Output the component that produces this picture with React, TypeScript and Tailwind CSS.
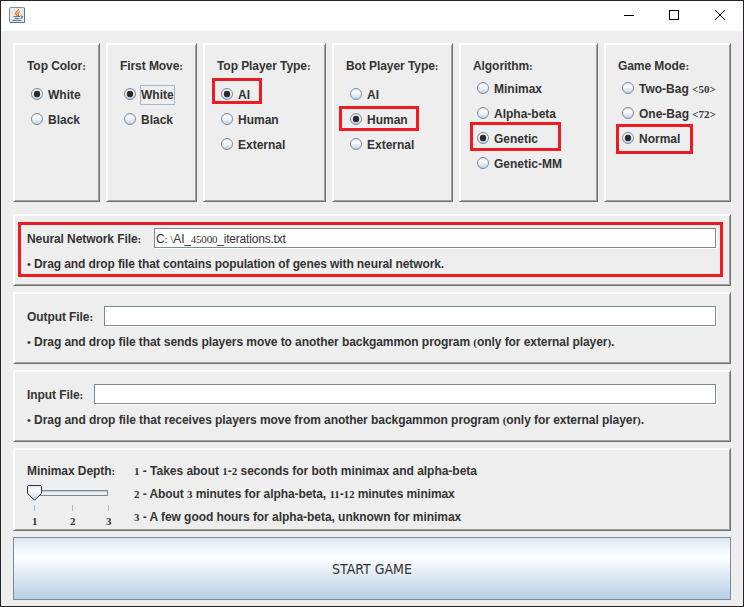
import type { ReactNode } from "react";

const sans = 'font-["Liberation_Sans",Arial,sans-serif]';

// Digits and a few symbols fall back to a serif face inside the sans labels.
function Text({ children, className = "" }: { children: string; className?: string }) {
  return (
    <span className={`inline-block h-[18px] whitespace-pre text-[12px] leading-[18px] ${className}`}>
      {children.split(/([0-9:()<>•\\]+)/).map((part, i) =>
        i % 2 ? (
          <span key={i} className='font-["Liberation_Serif",serif] text-[11px] leading-none'>
            {part}
          </span>
        ) : (
          part
        ),
      )}
    </span>
  );
}

function Panel({ className = "", children }: { className?: string; children: ReactNode }) {
  return (
    <section
      className={`border border-t-white border-r-[#6f6f6f] border-b-[#6f6f6f] border-l-white px-[13px] shadow-[inset_1px_1px_#fff,inset_-1px_-1px_#a2a2a2] ${className}`}
    >
      {children}
    </section>
  );
}

function Radio({ on }: { on: boolean }) {
  return (
    <svg width="12" height="12" viewBox="0 0 12 12" className="mt-[6px] shrink-0">
      <circle cx="6" cy="6" r="5.5" fill="url(#metal)" stroke="#7a8a99" />
      {on && <circle cx="6" cy="6" r="3.2" fill="#2b2b2b" />}
    </svg>
  );
}

function Mark({ className }: { className: string }) {
  return <div className={`pointer-events-none absolute border-[3px] border-[#ed1c24] ${className}`} />;
}

type Option = { label: string; on?: boolean; focus?: boolean; mark?: string };

function Group({ title, width, gap = "mt-[7px]", options }: { title: string; width: string; gap?: string; options: Option[] }) {
  return (
    <Panel className={`flex h-[159px] shrink-0 flex-col pt-[13px] ${width}`}>
      <Text className="tracking-[-0.07px]">{title}</Text>
      <div className={`flex flex-col pl-1 ${gap}`}>
        {options.map((o) => (
          <label key={o.label} className="relative flex h-[25px] items-start">
            <Radio on={!!o.on} />
            <span className={`ml-[5px] mt-[4px] flex ${o.focus ? "outline outline-[#a3b8cc]" : ""}`}>
              <Text>{o.label}</Text>
            </span>
            {o.mark && <Mark className={o.mark} />}
          </label>
        ))}
      </div>
    </Panel>
  );
}

type FileProps = { label: string; value?: string; labelClass: string; note: string; noteClass: string; mark?: string };

function FilePanel({ label, value = "", labelClass, note, noteClass, mark }: FileProps) {
  return (
    <Panel className="relative h-[72px] pt-[13px]">
      <div className="mr-px flex h-5">
        <Text className={`mt-[2px] shrink-0 tracking-[-0.08px] ${labelClass}`}>{label}</Text>
        <div className="flex h-5 grow border border-[#7a8a99] bg-white pl-[1px] shadow-[1px_1px_#fff]">
          <Text className="mt-[1px] font-normal tracking-[-0.2px]">{value}</Text>
        </div>
      </div>
      <Text className={`mt-[7px] ${noteClass}`}>{note}</Text>
      {mark && <Mark className={mark} />}
    </Panel>
  );
}

export default function App() {
  return (
    <div className={`flex h-[607px] w-[744px] flex-col border border-[#252326] bg-[#eeeeee] font-bold text-[#333333] ${sans}`}>
      <svg width="0" height="0" className="absolute">
        <linearGradient id="metal" x1="0" y1="0" x2="0" y2="1">
          <stop offset="0" stopColor="#dde8f3" />
          <stop offset="0.35" stopColor="#ffffff" />
          <stop offset="1" stopColor="#b8cfe5" />
        </linearGradient>
      </svg>

      <header className="flex h-[30px] shrink-0 items-start bg-white pl-2 pt-[6px]">
        <svg width="16" height="16" viewBox="0 0 16 16" fill="none">
          <rect x="0.5" y="0.5" width="15" height="15" rx="1" fill="#e6ebf0" stroke="#7790a4" />
          <path d="M1 15.500H15.500V1" stroke="#54748c" />
          <path d="M9.500 2C10 4 6.200 4.500 6.500 6.500C6.700 7.500 8 7.800 8 9M10.800 4.500C8.500 5.500 8.600 6.500 9.500 7.300C9.900 8 9.300 8.500 9 9" stroke="#e8771d" strokeWidth="1.300" />
          <path d="M4.500 9.500H11M5.500 11.500H10.500M3.500 13.500H12.500M11.500 9C14.500 8.800 13.500 11.500 11.500 11.500" stroke="#4f7894" strokeWidth="1.100" />
        </svg>
        <svg width="106" height="14" viewBox="0 0 106 14" className="ml-auto mr-[16px] mt-[1px]" fill="none" stroke="#000" shapeRendering="crispEdges">
          <path d="M3 7.500H13M48.500 2.500H57.500V11.500H48.500Z" />
          <path d="M94 2L104 12M104 2L94 12" shapeRendering="auto" />
        </svg>
      </header>

      <main className="flex flex-col px-3 pt-3">
        <div className="flex gap-[6px]">
          <Group title="Top Color:" width="w-[87px]" options={[{ label: "White", on: true }, { label: "Black" }]} />
          <Group title="First Move:" width="w-[91px]" options={[{ label: "White", on: true, focus: true }, { label: "Black" }]} />
          <Group
            title="Top Player Type:"
            width="w-[123px]"
            options={[{ label: "AI", on: true, mark: "-left-[9px] -top-[4px] h-[26px] w-[50px]" }, { label: "Human" }, { label: "External" }]}
          />
          <Group
            title="Bot Player Type:"
            width="w-[121px]"
            options={[{ label: "AI" }, { label: "Human", on: true, mark: "-left-[11px] -top-[1px] h-[25px] w-[80px]" }, { label: "External" }]}
          />
          <Group
            title="Algorithm:"
            width="w-[139px]"
            gap="mt-[1px]"
            options={[{ label: "Minimax" }, { label: "Alpha-beta" }, { label: "Genetic", on: true, mark: "-left-[7px] -top-[4px] h-[29px] w-[91px]" }, { label: "Genetic-MM" }]}
          />
          <Group
            title="Game Mode:"
            width="w-[127px]"
            gap="mt-[1px]"
            options={[{ label: "Two-Bag <50>" }, { label: "One-Bag <72>" }, { label: "Normal", on: true, mark: "-left-[6px] -top-[2px] h-[30px] w-[77px]" }]}
          />
        </div>

        <div className="mt-3 flex flex-col gap-[6px]">
          <FilePanel
            label="Neural Network File:"
            value="C: \AI_45000_iterations.txt"
            labelClass="w-[127px]"
            note="• Drag and drop file that contains population of genes with neural network."
            noteClass="tracking-[-0.1px]"
            mark="left-[4px] top-[7px] h-[55px] w-[705px]"
          />
          <FilePanel
            label="Output File:"
            labelClass="w-[77px]"
            note="• Drag and drop file that sends players move to another backgammon program (only for external player)."
            noteClass="tracking-[-0.066px]"
          />
          <FilePanel
            label="Input File:"
            labelClass="w-[67px]"
            note="• Drag and drop file that receives players move from another backgammon program (only for external player)."
            noteClass="tracking-[-0.054px]"
          />
          <Panel className="flex h-[83px] pt-[13px]">
            <div className="flex w-[107px] flex-col">
              <Text className="tracking-[-0.07px]">Minimax Depth:</Text>
              <svg width="84" height="28" viewBox="0 0 84 28" className="mt-[4px]" shapeRendering="crispEdges">
                <path d="M10 6.500H80.500V11.500H10" fill="#eeeeee" stroke="#7a8a99" />
                <path d="M10 7.500H80" stroke="#b8cfe5" />
                <path d="M7.500 21V27M45.500 21V27M81.500 21V27" stroke="#a3b8cc" />
                <path d="M0.500 2.500L1.500 1.500H13.500L14.500 2.500V9.300L7.500 16.300L0.500 9.300Z" fill="url(#metal)" stroke="#2b2f36" shapeRendering="auto" />
              </svg>
              <div className="flex pl-[5px]">
                <Text className="w-[38px]">1</Text>
                <Text className="w-[36px]">2</Text>
                <Text>3</Text>
              </div>
            </div>
            <div className="flex flex-col gap-[5px]">
              <Text className="tracking-[-0.025px]">1 - Takes about 1-2 seconds for both minimax and alpha-beta</Text>
              <Text className="tracking-[-0.07px]">2 - About 3 minutes for alpha-beta, 11-12 minutes minimax</Text>
              <Text className="tracking-[-0.05px]">3 - A few good hours for alpha-beta, unknown for minimax</Text>
            </div>
          </Panel>
          <button className='h-[63px] border border-[#7a8a99] bg-linear-to-b from-[#dde8f3] via-white via-30% to-[#b8cfe5] pt-[2px] font-["DejaVu_Sans_Condensed","DejaVu_Sans",sans-serif] text-[14px] font-normal'>
            START GAME
          </button>
        </div>
      </main>
    </div>
  );
}
